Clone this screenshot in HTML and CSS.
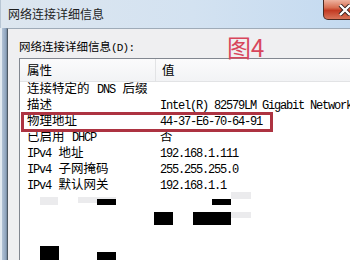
FILE: index.html
```html
<!DOCTYPE html>
<html lang="zh-CN">
<head>
  <meta charset="UTF-8" />
  <title>网络连接详细信息</title>
  <link rel="stylesheet" href="styles.css">
</head>
<body>
  <div class="window">
    <div class="titlebar">
      <span class="title">网络连接详细信息</span>
      <span class="close">
        <svg width="14" height="12" viewBox="0 0 14 12"><path d="M2 1 L12 11 M12 1 L2 11" stroke="#2a1a18" stroke-width="4"/><path d="M2 1 L12 11 M12 1 L2 11" stroke="#fff" stroke-width="2.4"/></svg>
      </span>
    </div>

    <div class="main">
      <div class="frame"></div>
      <div class="client">
        <div class="label">网络连接详细信息<span class="lat">(D):</span></div>
        <div class="list">
          <div class="head">
            <div class="hcol first">属性</div>
            <div class="hcol">值</div>
          </div>
          <div class="row"><span class="prop">连接特定的 <span class="lat">DNS</span> 后缀</span><span class="val lat"></span></div>
          <div class="row"><span class="prop">描述</span><span class="val lat">Intel(R) 82579LM Gigabit Network</span></div>
          <div class="row"><span class="prop">物理地址</span><span class="val lat">44-37-E6-70-64-91</span></div>
          <div class="row"><span class="prop">已启用 <span class="lat">DHCP</span></span><span class="val">否</span></div>
          <div class="row"><span class="prop"><span class="lat">IPv4</span> 地址</span><span class="val lat">192.168.1.111</span></div>
          <div class="row"><span class="prop"><span class="lat">IPv4</span> 子网掩码</span><span class="val lat">255.255.255.0</span></div>
          <div class="row"><span class="prop"><span class="lat">IPv4</span> 默认网关</span><span class="val lat">192.168.1.1</span></div>
        </div>
      </div>
    </div>

    <!-- 标注 -->
    <div class="fig">图4</div>
    <div class="mark"></div>

    <!-- 打码 -->
    <div class="smudge s1"></div>
    <div class="smudge s2"></div>
    <div class="smudge s3"></div>
    <div class="smudge s4"></div>
    <div class="redact r1"></div>
    <div class="redact r2"></div>
    <div class="redact r3"></div>
    <div class="redact r4"></div>
    <div class="redact r5"></div>
    <div class="redact r6"></div>
  </div>
</body>
</html>
```

FILE: styles.css
```css
body {
  margin: 0;
  font-family: "Noto Sans CJK SC", sans-serif;
  color: #000;
  background: #fff;
}

.window {
  position: relative;
  width: 350px;
  height: 260px;
  overflow: hidden;
}

.titlebar {
  height: 28px;
  display: flex;
  align-items: flex-start;
  justify-content: space-between;
  padding-left: 7px;
  background: linear-gradient(to right, #dde6ef, #d3e2f1 55%, #c4daf0);
  box-sizing: border-box;
  border-left: 1px solid #b8c6d4;
}

.title {
  font-size: 12px;
  line-height: 28px;
  color: #1e1e1e;
}

.close {
  flex-shrink: 0;
  width: 44px;
  height: 20px;
  margin-right: -17px;
  display: flex;
  align-items: center;
  justify-content: center;
  box-sizing: border-box;
  border: 1px solid #4a2a22;
  border-top: none;
  border-radius: 0 0 5px 5px;
  background: linear-gradient(#eeb3a0, #d86f52 40%, #c23a22 55%, #d8755a);
}

.main {
  display: flex;
  height: 232px;
}

.frame {
  flex-shrink: 0;
  width: 7px;
  background: linear-gradient(to right, #e3eaf1 0, #e3eaf1 2px, #b3c3d6 2px, #8da3bd 6px, #6d7f93 7px);
}

.client {
  flex: 1;
  min-width: 0;
  display: flex;
  flex-direction: column;
  padding-left: 11px;
  background: #efeff1;
  border-left: 1px solid #4e5964;
  border-top: 1px solid #9fabb8;
}

.label {
  font-size: 11.5px;
  line-height: 16px;
  padding-top: 9px;
  margin-bottom: 2px;
  white-space: nowrap;
}

.label .lat {
  font-size: 11px;
  letter-spacing: -0.8px;
}

.list {
  flex: 1;
  background: #fff;
  border-left: 1px solid #828790;
  border-top: 1px solid #828790;
  overflow: hidden;
}

.head {
  display: flex;
  height: 22px;
  background: linear-gradient(#fbfbfc, #f2f3f5);
  border-bottom: 1px solid #e2e3e5;
}

.hcol {
  font-size: 12.5px;
  line-height: 22px;
  padding-left: 6px;
}

.hcol.first {
  width: 128px;
  padding-left: 7px;
  border-right: 1px solid #e2e3e5;
}

.row {
  display: flex;
  height: 16px;
  line-height: 16px;
  padding-left: 7px;
  font-family: "Liberation Mono", "Noto Sans CJK SC", monospace;
  font-size: 12.5px;
  white-space: nowrap;
}

.prop {
  width: 133px;
  flex-shrink: 0;
}

.lat {
  font-family: "Liberation Mono", monospace;
  font-size: 12px;
  letter-spacing: -1.2px;
}

/* 标注 */
.fig {
  position: absolute;
  left: 227px;
  top: 32px;
  font-size: 24px;
  line-height: 30px;
  color: #d8465c;
}

.mark {
  position: absolute;
  left: 21px;
  top: 112px;
  width: 252px;
  height: 20px;
  box-sizing: border-box;
  border: 3px solid #ad3341;
}

.redact,
.smudge {
  position: absolute;
}

.redact { background: #000; }
.smudge { background: #ebebed; }

.r1 { left: 97px;  top: 199px; width: 19px; height: 6px; }
.r2 { left: 212px; top: 199px; width: 19px; height: 6px; }
.r3 { left: 154px; top: 212px; width: 19px; height: 13px; }
.r4 { left: 193px; top: 212px; width: 38px; height: 13px; }
.r5 { left: 40px;  top: 246px; width: 19px; height: 14px; }
.r6 { left: 97px;  top: 252px; width: 19px; height: 8px; }

.s1 { left: 40px;  top: 197px; width: 18px; height: 8px; }
.s2 { left: 78px;  top: 197px; width: 38px; height: 6px; }
.s3 { left: 231px; top: 192px; width: 20px; height: 7px; }
.s4 { left: 231px; top: 212px; width: 20px; height: 6px; }
```
